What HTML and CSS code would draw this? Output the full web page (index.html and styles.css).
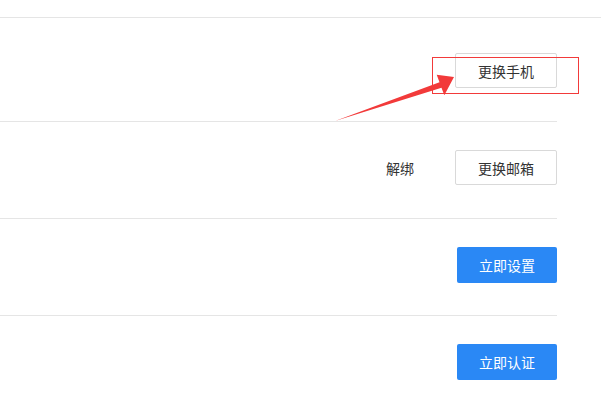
FILE: index.html
```html
<!DOCTYPE html>
<html lang="zh-CN">
<head>
<meta charset="utf-8">
<title>账号安全</title>
<link rel="stylesheet" href="styles.css">
</head>
<body>
<div class="page">
  <div class="topline"></div>
  <div class="list">
    <div class="row row-first">
      <button class="btn btn-default">更换手机</button>
    </div>
    <div class="row">
      <span class="link">解绑</span>
      <button class="btn btn-default">更换邮箱</button>
    </div>
    <div class="row">
      <button class="btn btn-primary">立即设置</button>
    </div>
    <div class="row row-last">
      <button class="btn btn-primary">立即认证</button>
    </div>
  </div>
  <div class="highlight"></div>
  <svg class="arrow" width="601" height="400" viewBox="0 0 601 400">
    <polygon points="335,121 439.5,82.2 436.7,74.7 454,77 444.3,95.3 441.5,87.8" fill="#f23a3a"/>
  </svg>
</div>
</body>
</html>
```
FILE: styles.css
```css
html, body {
  margin: 0;
  padding: 0;
  background: #fff;
}
body {
  font-family: "Noto Sans CJK SC", "Noto Sans", sans-serif;
  font-size: 14px;
  color: #333;
}
.page {
  position: relative;
  width: 601px;
  height: 400px;
  overflow: hidden;
}
.topline {
  height: 17px;
  border-bottom: 1px solid #e5e5e5;
}
.list {
  width: 557px;
}
.row {
  display: flex;
  justify-content: flex-end;
  align-items: flex-start;
  height: 68px;
  padding-top: 28px;
  border-bottom: 1px solid #e5e5e5;
}
.row-first {
  height: 68px;
  padding-top: 35px;
}
.row-last {
  border-bottom: none;
}
.link {
  line-height: 36px;
  margin-right: 41px;
  color: #333;
}
.btn {
  box-sizing: border-box;
  height: 36px;
  font-family: inherit;
  font-size: 14px;
  border-radius: 2px;
  padding: 0;
  cursor: pointer;
}
.btn-default {
  width: 102px;
  height: 35px;
  background: #fff;
  border: 1px solid #d9d9d9;
  color: #333;
}
.btn-primary {
  width: 100px;
  background: #2a88f5;
  border: none;
  color: #fff;
}
.highlight {
  position: absolute;
  left: 432px;
  top: 57px;
  width: 145px;
  height: 35px;
  border: 1px solid #f23a3a;
}
.arrow {
  position: absolute;
  left: 0;
  top: 0;
  pointer-events: none;
}
```
